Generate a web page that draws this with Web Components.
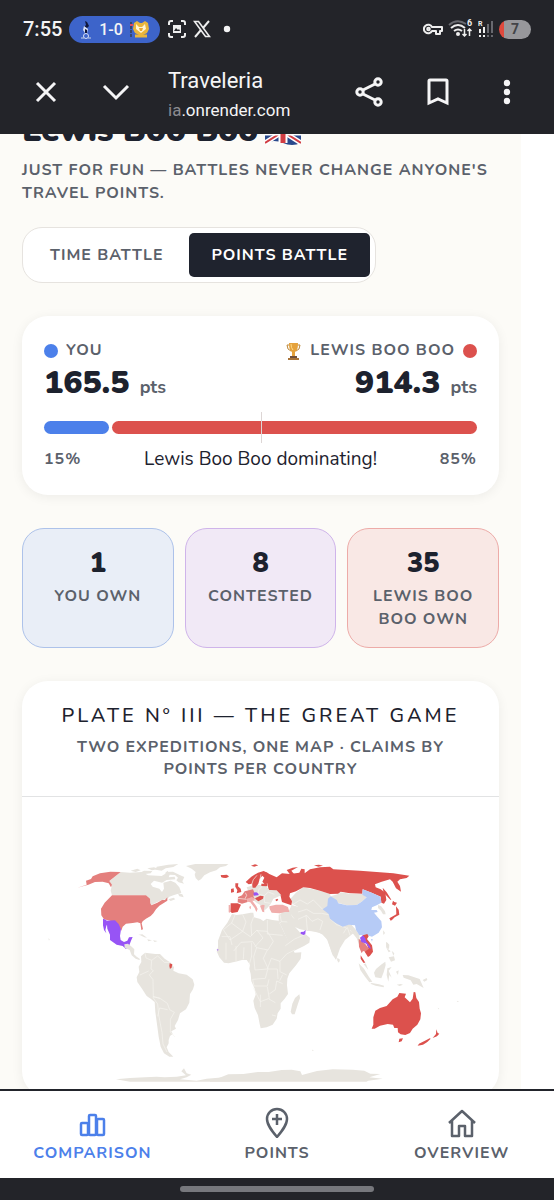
<!DOCTYPE html>
<html lang="en">
<head>
<meta charset="utf-8">
<meta name="viewport" content="width=device-width, initial-scale=1">
<title>Traveleria</title>
<style>
body{margin:0;background:#fff;color:#1d222e;font-family:Nunito,Lato,"Open Sans",sans-serif;--ink:#1d222e;--muted:#5b616b;--blue:#4c80ea;--red:#dc514d;--bar:#232429;--label:16px;--track:1px}
</style>
</head>
<body>
<travel-app></travel-app>
<script>
const define = (name, html) => {
  const t = document.createElement('template');
  t.innerHTML = html;
  customElements.define(name, class extends HTMLElement {
    constructor() {
      super();
      this.attachShadow({mode: 'open'}).append(t.content.cloneNode(true));
    }
  });
};

define('status-bar', `
<style>
:host{display:flex;align-items:center;height:58px;padding:0 23px;box-sizing:border-box;color:#f4f4f5;font-family:Roboto,sans-serif}
.time{font-size:20px;font-weight:500;width:46px}
.score{display:flex;align-items:center;justify-content:center;gap:7px;width:91px;height:27px;border-radius:14px;background:#3d64ca;font-size:16px;font-weight:500}
.left{display:flex;align-items:center;gap:7px;margin-left:8px;flex:1}
.right{display:flex;align-items:center;gap:5px}
.battery{width:32px;height:19px;border-radius:10px;background:linear-gradient(90deg,#df493d 5px,#97979b 5px);color:#434448;font-size:14px;font-weight:700;line-height:19px;text-align:center}
svg{display:block}
</style>
<span class="time">7:55</span>
<span class="score">
<svg width="12" height="19" viewBox="0 0 12 19"><path d="M5 1l2 1 2 4-2 2-3-1 2-2z" fill="#10173b"/><path d="M4 6l4 3-1 4H5L3 10z" fill="#d9e0f5"/><path d="M5 9l2 1v3H5z" fill="#10173b"/><circle cx="6" cy="16" r="2.500" fill="none" stroke="#d9e0f5"/><path d="M1 18h3m4 0h3" stroke="#c3d1e8"/></svg>
<span>1-0</span>
<svg width="19" height="19" viewBox="0 0 19 19"><path d="M1 2v15" stroke="#36476e" stroke-width="2" stroke-dasharray="3 1"/><path d="M0 5h3" stroke="#e04960" stroke-width="2"/><path d="M4 3l3-2 3 2h2l3-2 3 2 1 6-2 4-4 2H9l-4-2-2-4z" fill="#e9b63c"/><path d="M6 4l3 3h3l3-3 1 5-5 4-5-4z" fill="#fff5d5"/><path d="M9 8h4l-1 3h-2z" fill="#eaa931"/><path d="M5 16h12" stroke="#e9b63c" stroke-width="3"/></svg>
</span>
<div class="left">
<svg width="18" height="18" viewBox="0 0 18 18" fill="none" stroke="#eee" stroke-width="2"><path d="M1 5V3q0-2 2-2h2M13 1h2q2 0 2 2v2M17 13v2q0 2-2 2h-2M5 17H3q-2 0-2-2v-2"/><path d="M5 5h8v8H5z" fill="#eee" stroke="none"/><path d="M6 11l2-3 2 2 1-1 1 2z" fill="#232429" stroke="none"/></svg>
<svg width="18" height="18" viewBox="0 0 18 18" fill="none" stroke="#eee"><path d="M1.500 1.500h4l11 15h-4z" stroke-width="1.600"/><path d="M16 1l-6 7M8 10l-6 7" stroke-width="2"/></svg>
<svg width="18" height="8" viewBox="0 0 18 8"><circle cx="9" cy="4" r="3.200" fill="#f4f4f5"/></svg>
</div>
<div class="right">
<svg width="20" height="14" viewBox="0 0 20 14" fill="none" stroke="#eee" stroke-width="2"><path d="M9 5h10v4h-2v3h-4V9H9A4.300 4.300 0 1 1 9 5z" stroke-linejoin="round"/><circle cx="5.500" cy="7" r="1.300"/></svg>
<svg width="25" height="20" viewBox="0 0 25 20" fill="none"><path d="M1 6Q9-1 18 5" stroke="#68696f" stroke-width="2"/><path d="M3 9q7-6 14 0M6 12q4-3 8 0" stroke="#eee" stroke-width="2"/><circle cx="10" cy="15" r="2" fill="#eee"/><path d="M16.500 10v7m-2-2l2 2 2-2M21.500 17v-7m-2 2l2-2 2 2" stroke="#eee" stroke-width="1.500"/><text x="19" y="7" font-size="9" font-weight="700" fill="#eee">6</text></svg>
<svg width="16" height="18" viewBox="0 0 16 18"><text x="0" y="6" font-size="7" font-weight="700" fill="#eee">R</text><path d="M2 9v4M6 7v6M2 15v2M6 15v2" stroke="#eee" stroke-width="2"/><path d="M10 4v9M14 1v12M10 15v2M14 15v2" stroke="#68696f" stroke-width="2"/></svg>
<span class="battery">7</span>
</div>`);

define('browser-bar', `
<style>
:host{display:flex;align-items:center;height:76px;padding:0 25px 8px 24px;box-sizing:border-box;color:#f5f5f6;font-family:Roboto,sans-serif}
button{border:0;padding:0;background:none;color:inherit;width:44px;height:44px;display:grid;place-items:center}
.close{margin-right:26px}
.page{flex:1;min-width:0;margin-left:30px;padding-top:6px}
.title{font-size:22px;line-height:30px}
.url{font-size:17px;line-height:28px}
.url i{font-style:normal;color:#8b8b90}
.actions{display:flex;gap:25px}
svg{fill:none;stroke:currentColor;stroke-width:3}
</style>
<button class="close" aria-label="Close"><svg width="22" height="22"><path d="M2 2l18 18M20 2L2 20"/></svg></button>
<button aria-label="Minimise"><svg width="28" height="20"><path d="M2 4l12 12L26 4"/></svg></button>
<div class="page"><div class="title">Traveleria</div><div class="url"><i>ia</i>.onrender.com</div></div>
<div class="actions">
<button aria-label="Share"><svg width="28" height="30"><circle cx="5" cy="15" r="3.200"/><circle cx="23" cy="5" r="3.200"/><circle cx="23" cy="25" r="3.200"/><path d="M8 13l12-6M8 17l12 6"/></svg></button>
<button aria-label="Bookmark"><svg width="22" height="28"><path d="M2 3q0-1 1-1h16q1 0 1 1v22l-9-4-9 4z" stroke-linejoin="miter"/></svg></button>
<button aria-label="Menu"><svg width="8" height="26" style="fill:currentColor;stroke:none"><circle cx="4" cy="4" r="3.200"/><circle cx="4" cy="13" r="3.200"/><circle cx="4" cy="22" r="3.200"/></svg></button>
</div>`);

define('battle-intro', `
<style>
:host{display:block}
h1{display:flex;align-items:center;gap:7px;margin:-23px 0 8px;font-size:33px;line-height:40px;font-weight:900}
p{margin:0;font-size:var(--label);line-height:23px;font-weight:700;letter-spacing:var(--track);color:var(--muted)}
</style>
<h1>Lewis Boo Boo
<svg width="36" height="28" viewBox="0 0 36 28" role="img" aria-label="United Kingdom"><path d="M0 2q9-4 18 0t18 0v24q-9 4-18 0T0 26z" fill="#29498c"/><path d="M0 3l36 23M36 3L0 26" stroke="#fff" stroke-width="5"/><path d="M0 3l36 23M36 3L0 26" stroke="#d13d43" stroke-width="2"/><path d="M18 2v24M0 14h36" stroke="#fff" stroke-width="9"/><path d="M18 2v24M0 14h36" stroke="#d13d43" stroke-width="5"/></svg></h1>
<p><slot></slot></p>`);

define('mode-switch', `
<style>
:host{display:flex;gap:4px;width:max-content;box-sizing:border-box;margin-top:22px;padding:5px;border:1px solid #e6e3df;border-radius:20px;background:#fff}
button{border:0;border-radius:5px;height:44px;padding:0 22px;background:none;font:700 var(--label)/44px Nunito,Lato,"Open Sans",sans-serif;letter-spacing:var(--track);color:var(--muted)}
.on{background:#1f232e;color:#fff}
</style>
<button aria-pressed="false">TIME BATTLE</button><button class="on" aria-pressed="true">POINTS BATTLE</button>`);

define('score-card', `
<style>
:host{display:block;margin-top:33px;padding:23px 22px 24px;border-radius:26px;background:#fff;box-shadow:0 2px 12px #00000010}
.row{display:flex;justify-content:space-between;align-items:center}
.name{display:flex;align-items:center;gap:8px;font-size:var(--label);line-height:23px;font-weight:700;letter-spacing:var(--track);color:var(--muted)}
.dot{width:14px;height:14px;border-radius:50%;background:var(--blue)}
.dot.r{background:var(--red)}
.points{font-size:32px;line-height:42px;font-weight:900}
small{font-size:18px;font-weight:700;color:var(--muted);margin-left:1px}
.track{position:relative;display:flex;gap:3px;height:13px;margin:13px 0}
.track span{flex:15;border-radius:7px;background:var(--blue)}
.track .r{flex:85;background:var(--red)}
.track i{position:absolute;left:50%;top:-9px;width:1px;height:31px;background:#ddd6d5}
.verdict{font-size:19px;line-height:24px}
</style>
<div class="row"><div class="name"><span class="dot"></span>YOU</div>
<div class="name"><svg width="17" height="18" viewBox="0 0 15 18" role="img" aria-label="Winner"><path d="M4 3H1q0 5 4 6M11 3h3q0 5-4 6" fill="none" stroke="#bd8738"/><path d="M3 1h9q0 8-3 9v4H6v-4Q3 9 3 1z" fill="#e5a23c"/><path d="M5 2q0 4 2 6" stroke="#ffdc87" fill="none"/><path d="M4 14h7v3H4z" fill="#70503b"/><path d="M2 17h11" stroke="#a87338" stroke-width="2"/></svg><span>LEWIS BOO BOO</span><span class="dot r"></span></div></div>
<div class="row"><div class="points">165.5 <small>pts</small></div><div class="points">914.3 <small>pts</small></div></div>
<div class="track"><span></span><span class="r"></span><i></i></div>
<div class="row"><span class="name">15%</span><span class="verdict">Lewis Boo Boo dominating!</span><span class="name">85%</span></div>`);

define('stat-tile', `
<style>
:host{display:block;padding:18px 20px 16px;border:1px solid #adc2ea;border-radius:22px;background:#e9eef7;text-align:center}
:host([tone=purple]){background:#f1e9f6;border-color:#cfb4ea}
:host([tone=red]){background:#f9e8e5;border-color:#edaba8}
b{display:block;font-size:27px;line-height:34px;font-weight:900;margin-bottom:4px}
span{display:block;font-size:var(--label);line-height:23px;font-weight:700;letter-spacing:var(--track);color:var(--muted)}
</style>
<b><slot name="count"></slot></b><span><slot></slot></span>`);

define('stat-row', `
<style>:host{display:grid;grid-template-columns:repeat(3,1fr);gap:11px;margin-top:33px}</style><slot></slot>`);

define('world-map', `
<style>
:host{display:block}
svg{display:block;width:100%;height:auto}
.land{fill:#e7e4de}.red{fill:#dc514d}.rose{fill:#e47f7d}.pink{fill:#f0aeac}.purple{fill:#9754f5}.blue{fill:#b6cbf6}
.edge{fill:none;stroke:#f6f4f0;stroke-width:2;stroke-linejoin:round}
</style>
<svg viewBox="22 797 477 300" role="img" aria-label="World map of claims">
<g transform="translate(30 850) scale(.33333)">
<path class="land" d="M272 66L300 68 335 66 355 76 395 78 405 72 412 62 420 72 416 82 434 80 436 88 410 90 396 98 372 92 362 102 368 110 388 116 396 126 402 116 400 98 422 92 436 98 448 112 454 128 430 136 418 140 412 146 390 152 362 166 360 148 348 136 246 136 242 122 246 104 238 94z"/>
<path class="land" d="M302 62l20-6 10 5-15 5zM330 68l12-6 25 1-5 7-22 3zM352 55l20-3 14 5-20 4zM380 50l35-6 30-2-15 9-23 4-12 7-18-3zM405 66l24-1 20 10 14 6-6 13 5 7-16-4-7-6 5-8-9-8-16-1zM443 129l14 4 4 9-13-3zM415 148l16-5 5 5-14 5z"/>
<path class="land" d="M468 48l28-6h99l-7 6-18 4-11 9-19 6-17 9-10 12-8 4-8-8-3-10 3-8-12-10z"/>
<path class="red" d="M572 75l9 2 8-1 8 4-9 4-14-2z"/>
<path class="rose" d="M142 113L170 104 168 92 183 87 188 79 210 70 241 65 272 66 238 93 246 104 243 112 236 100 218 95 195 96 175 104z"/>
<path class="rose" d="M246 136H348L360 146 361 160 364 166 382 158 396 150 405 150 412 142 412 152 400 160 388 167 378 178 370 190 362 198 348 206 338 214 335 220 339 238 334 240 331 220 322 217 308 219 288 221 278 230 274 242 264 226 254 217 240 212 222 208 214 196 213 176 224 158z"/>
<path class="purple" d="M219 206L229 210 232 222 229 228 226 240 229 250 222 240 219 226zM230 212L255 211 266 222 273 238 270 258 272 270 282 276 292 272 297 262 308 261 303 272 297 288 288 297 278 288 260 284 240 270 240 254 232 236z"/>
<path class="land" d="M283 283l11-2 12 10 7 7-1 15 8 7 10 7-2 3-11-4-12-10-6-16-15-7zM325 254l12-1 14 10-8-1-12-6zM352 268l14 3-11 3zM369 271l14 2-9 3zM55 265l4 3-2 4z"/>
<path class="land" d="M333 319L345 308 357 310 376 312 390 312 404 326 422 338 432 352 430 362 446 370 470 374 488 388 493 404 489 418 480 432 478 458 468 478 450 490 444 510 434 528 438 536 424 544 428 552 420 558 416 570 416 580 410 592 416 606 430 620 418 620 402 610 392 590 386 560 382 530 376 486 374 456 362 446 350 438 336 416 322 396 320 382 328 366 326 350 334 336z"/>
<path class="red" d="M419 340l8 3-2 9-5 5-2-9z"/>
<path class="edge" d="M345 309l3 15 17 7-2 26 7 5-12 13 11 14 1 55 13 18 3 33 10 52 3 35 12 24M365 331l18-13 20 19 18 0M370 440l20 5 22 15 7 19 14 8-12 21 0 38 14 15M390 445l-20-5M330 375l26-12M413 479l-24-5-6 25"/>
<path class="land" d="M258 688L300 684 345 682 380 680 404 682 440 680 468 676 454 664 462 655 466 662 470 670 484 674 470 682 450 688 500 692 530 686 600 680V695H300z"/>
</g>
<g transform="translate(210 900) scale(.33333)">
<path class="land" d="M66 42L80 45 98 43 122 38 130 38 132 52 151 57 160 63 170 56 187 60 206 62 216 84 232 118 242 136 254 158 274 157 272 176 258 196 238 220 232 236 231 256 234 282 224 296 212 310 212 326 203 340 200 356 188 374 170 382 152 385 149 372 144 346 134 324 130 302 137 284 134 266 124 244 122 222 118 206 120 194 110 180 96 180 82 184 56 190 42 188 28 172 20 154 24 142 24 122 36 90 52 68zM268 283l2 11-7 20-9 29-8 0-4-8 5-24 8-17zM382 175l7 9-5 4z"/>
<path class="land" d="M206 44L238 30 245 15 270 22 310 10 360 40 430 100 405 120 390 145 378 180 366 158 352 118 338 104 325 96 292 92 276 88 262 76 256 82 272 100 286 102 300 114 298 128 282 138 250 154 244 150 232 120 218 88 206 64z"/>
<path class="edge" d="M208 34l6 31-6 6M214 65l26 1 36 22M226 137l28-20 28-12M240 40l26 34M306 58l0-28 32-7M300 92l6-34M318 70l26-44M338 97l22-38 15 12 38 22M400 76l8 27M75 45l-10 24-25 20 20 31 38-26-35-26M98 44l10 22-10 28 23 16 20-20 18 24-24 26M131 50l-8 22 2 35M172 60l0 42 46 4M141 92l31 2 18 30-16 26-34-7-12-18-35 2-22 26M35 110h25l6 25M48 128l0 51M78 138v46M102 142l-2 36M125 128l0 40-8 28M140 142l-9 28 4 40 37-3 12-32 26 9 20-22 24-12M172 150l-12 25 14 30-8 30-38 3 4 20 40 0 5-20M210 184l0 31 20 10M174 207l28 0 2 30M130 263l21 42M151 305l24-9 21 12M151 284l0 37M172 260l6 36M178 282l18-13 4-26 18 8M186 345l12 3M218 224l-9 18"/>
<path class="land" d="M446 190l16 16 15 25 10 14-9 2-14-18-13-19zM485 249l22 4 15 4-1 5-24-5-16-6zM498 207l17-14 11-8 1 10-6 22-7 18-18-3-4-14zM532 205l13-4-9 11 9 21-7-8-3 20-5-20zM528 125l7 8-2 13 9 8-6 3-7-14zM536 172l16-3 3 12-12 4zM545 152l8 8-3 7zM558 215l8-4-2 14zM578 225l17 1 16 5 18 6 12 27-21-12-10 2-8-13-21-8zM560 254l12-2 7 2-10 4zM638 240l12-6 2 6-9 5zM683 323l5 3-3 2zM740 305l4-3 2 4zM520 90l4 10-4 5z"/>
<path class="red" d="M496 332L510 324 530 318 548 298 562 290 568 279 588 281 584 292 600 307 608 296 611 276 616 277 619 294 627 306 629 326 633 340 631 358 622 374 608 386 600 399 586 405 572 403 564 397 563 384 553 384 549 374 533 372 510 377 494 386 485 386 490 374 490 352zM568 416l11-1-4 9-9 3zM679 388l4 11 5 2-7 8-13 5 10-12zM662 416l-10 10-13 8-16 3 4-6 18-9 14-7z"/>
<path class="purple" d="M272 96l9-1 6-6-1 13-5 3-9-4zM20 148l6 1-3 3z"/>
<path class="land" d="M0 544l25-9 30-12 45-1 44-6 32 0 39-6 30-1 26 5 5 11 45-12 47-5 60 1 35 3 18 9 30 1-33 10 40 4-43 6-6 3H0z"/>
<path class="land" d="M306 450l3-1 2 3-4 0z"/>
</g>
<g transform="translate(310 850) scale(.33333)">
<path class="land" d="M-62 150L-40 126 -20 112 30 122 60 132 62 139 60 160 100 220 125 225 138 240 148 255 150 290 140 265 128 250 120 240 108 252 96 270 84 292 78 328 68 316 52 270 38 252 10 244 -30 238 -66 222 -74 196 -92 188 -90 172 -56 182 -56 204 -36 208 -44 186 -36 170 -52 162z"/>
<path class="edge" d="M-58 168L-30 150 -8 162 10 150 38 178M-36 208L-10 196 6 214 24 206 38 214 30 240M-36 186L-10 178 10 190 34 190 56 194M-12 196L-8 240M60 206L80 224 110 234 100 250M112 232L120 256"/>
<path class="red" d="M-134 66L-122 72 -100 82 -84 70 -60 72 -32 68 -26 56 -16 58 -16 70 0 58 30 52 60 50 70 58 110 60 150 62 200 66 250 70 298 77 290 84 270 88 262 95 270 108 273 125 258 115 248 95 240 88 215 95 195 103 197 112 212 118 226 128 229 150 222 161 214 158 212 140 185 128 158 118 157 131 120 130 92 125 85 131 60 132 30 122 0 114 -20 112 -42 124 -60 130 -62 140 -54 154 -56 166 -84 156 -88 138 -104 124 -124 120 -128 100 -134 86z"/>
<path class="land" d="M62 139L85 132 92 127 120 131 157 132 170 141 155 155 140 165 110 166 84 158z"/>
<path class="red" d="M12 46l15-2 12 3-14 3zM-70 60l18-7 16-2-20 11 10 12-15-2zM218 113l12 14 14 22-3 0-20-21zM249 152l4 4 8 2-6 9-9-4zM258 169l8 10 2 15-14 8-8 8-4 2-4-7 12-7 9-5z"/>
<path class="blue" d="M62 139L80 150 85 160 110 166 140 165 155 155 170 142 157 134 158 118 185 128 212 140 214 158 200 166 186 172 184 180 200 180 203 186 192 188 202 200 214 214 216 232 206 248 186 260 166 254 148 256 138 240 135 226 116 224 98 230 76 218 60 206 56 192 38 178 52 168 54 146zM183 267l5 0-2 8z"/>
<path class="land" d="M204 165l9 3 12 16 2 9-8 0-6-11-9-8zM220 242l4 5-2 7zM230 276l8 8-1 14-8-8zM82 324l7 4 0 6-7-2z"/>
<path class="rose" d="M146 266l12 9 8 7 14 19-9 6-12-4-4 7-8-20z"/>
<path class="red" d="M158 256l14-4 4 7-5 8 15 19 3 19-9 12-6 4-10-16 12-8-7-18-12-14zM152 316l9 14 5 8-6 0-8-12z"/>
<path class="purple" d="M150 263l9-7 7 9 2 8 11 14 4 9-6-2-8-13-15-5z"/>
<path class="land" d="M167 340l8 20-14-17z"/>
</g>
<g transform="translate(210 850) scale(.33333)">
<path class="land" d="M110 112L130 106 165 104 178 120 200 121 214 136 190 146 182 162 172 174 160 184 152 166 142 160 124 146z"/>
<path class="red" d="M33 76l17-2 7 5-14 4-9-2zM76 100l9 0-1 9 8 7 2 10-14 4 2-9-6-11zM63 117l8-2 1 11-9 2zM107 96l17-16 20-12 17-5 13 6 5 10-2 20-14 2-6-6 6-12-6-6-8 10-4 14-9 12-8 0-2-12-10 2zM62 160l21 0 10 4-10 22-17 3-5-4zM154 101l18-1 0 9-18-1zM138 143l13-6 10 2-2 7-14 8-10-8zM196 149l6-3 3 4-6 4zM123 47l12-4 10 3-12 4z"/>
<path class="edge" d="M124 107q3-20 17-31M150 89l3-16"/>
<path class="rose" d="M84 141l12-5 8-12 25-6 5 12-4 9 4 8-22-1 1 10-17 5-13-4z"/>
<path class="pink" d="M111 147l14-6 8 3 0 8-6 0 12 17 4 8-4 9-5-12-13-17-8-2zM56 165l6 0-2 23-4-1zM150 167l9-3 5 2-2 12 1 9-6-2zM178 169l20-5 20 0 16 7 4 15-13 0-16 4-24-2-6-11zM119 169l4 0-1 9-4-4z"/>
<path class="edge" d="M84 145l26 3M106 128l4 8-5 10"/>
<path class="purple" d="M130 128l9-1 9 5-4 4-12 1z"/>
<path class="edge" d="M156 110l-10 9-1 13 18 5 12-11 18 7M163 137l0 20 19 3"/>
</g>
</svg>`);

define('map-card', `
<style>
:host{display:block;margin-top:33px;background:#fff;border-radius:26px;box-shadow:0 2px 12px #00000010}
header{padding:22px 24px 16px;border-bottom:1px solid #e2e3e4;text-align:center}
h2{margin:0 0 7px;font-size:20px;line-height:26px;font-weight:500;letter-spacing:3px}
p{margin:0 auto;max-width:390px;font-size:var(--label);line-height:22px;font-weight:700;letter-spacing:var(--track);color:var(--muted)}
</style>
<header><h2><slot name="title"></slot></h2><p><slot></slot></p></header>
<world-map></world-map>`);

define('nav-link', `
<style>
:host{flex:1}
a{display:flex;flex-direction:column;align-items:center;gap:4px;padding-top:15px;color:var(--muted);text-decoration:none;font-size:var(--label);line-height:22px;font-weight:700;letter-spacing:var(--track)}
:host([active]) a{color:var(--blue)}
</style>
<a href="#"><slot name="icon"></slot><slot></slot></a>`);

define('tab-bar', `
<style>
:host{display:block;background:var(--bar)}
nav{display:flex;height:87px;background:#fff;border-top:2px solid #22242b}
.grip{height:22px;display:grid;place-items:center}
.grip i{width:35%;height:6px;border-radius:3px;background:#77787d}
svg{display:block;width:32px;height:32px;fill:none;stroke:currentColor;stroke-width:2.500;stroke-linejoin:round}
</style>
<nav>
<nav-link active><svg slot="icon" viewBox="0 0 32 32"><rect x="5" y="17" width="7" height="12" rx="1"/><rect x="13" y="9" width="7" height="20" rx="1"/><rect x="21" y="13" width="7" height="16" rx="1"/></svg>COMPARISON</nav-link>
<nav-link><svg slot="icon" viewBox="0 0 32 32"><path d="M16 31C11 25 6 19 6 13a10 10 0 0 1 20 0c0 6-5 12-10 18zM16 8v11M11 13h10"/></svg>POINTS</nav-link>
<nav-link><svg slot="icon" viewBox="0 0 32 32"><path d="M3 17L16 5l13 12M6 15v15h7V20h6v10h7V15"/></svg>OVERVIEW</nav-link>
</nav><div class="grip"><i></i></div>`);

define('travel-app', `
<style>
:host{display:flex;flex-direction:column;height:100vh;overflow:hidden}
.top{background:var(--bar);flex:none}
main{flex:1;min-height:0;overflow:hidden;background:#fff}
.sheet{min-height:100%;margin-right:33px;padding:0 22px;background:#fcfbf7;display:flow-root}
tab-bar{flex:none}
</style>
<div class="top"><status-bar></status-bar><browser-bar></browser-bar></div>
<main><div class="sheet">
<battle-intro>JUST FOR FUN — BATTLES NEVER CHANGE ANYONE'S TRAVEL POINTS.</battle-intro>
<mode-switch></mode-switch>
<score-card></score-card>
<stat-row>
<stat-tile><span slot="count">1</span>YOU OWN</stat-tile>
<stat-tile tone="purple"><span slot="count">8</span>CONTESTED</stat-tile>
<stat-tile tone="red"><span slot="count">35</span>LEWIS BOO BOO OWN</stat-tile>
</stat-row>
<map-card><span slot="title">PLATE Nº III — THE GREAT GAME</span>TWO EXPEDITIONS, ONE MAP · CLAIMS BY POINTS PER COUNTRY</map-card>
</div></main>
<tab-bar></tab-bar>`);
</script>
</body>
</html>
